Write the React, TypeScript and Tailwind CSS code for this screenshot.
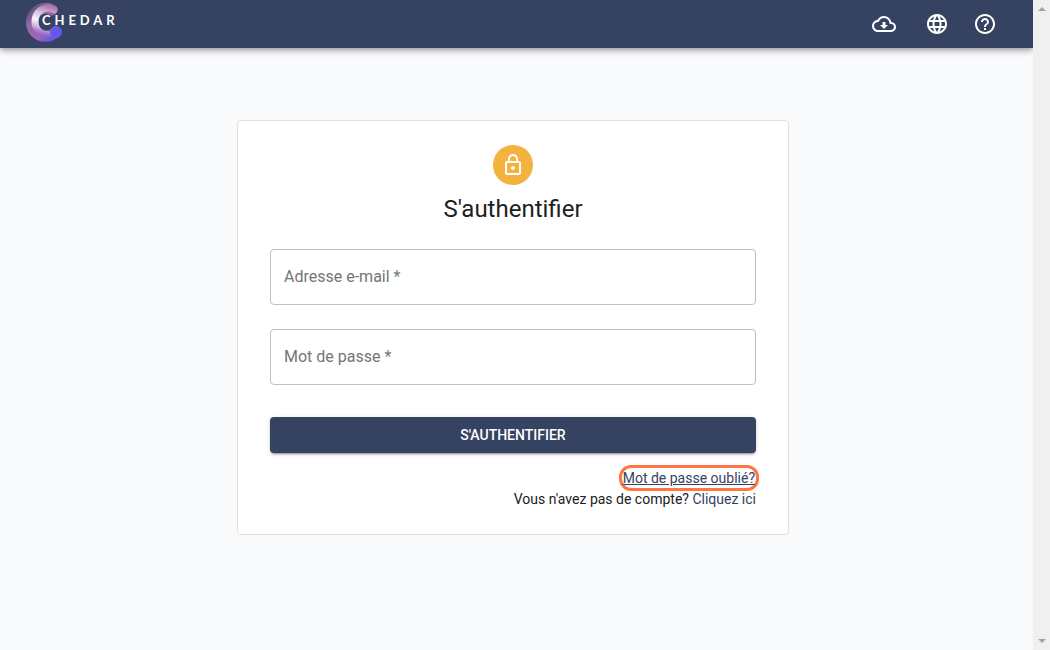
import { useState } from "react";
import type { ReactNode } from "react";
import { MdHelpOutline, MdLanguage, MdLockOutline } from "react-icons/md";

function Logo() {
  return (
    <a href="#" aria-label="Chedar" className="flex items-center pl-6 text-white">
      <svg viewBox="0 0 42 48" className="h-12 w-[42px]" fill="none" strokeLinecap="round" aria-hidden="true">
        <defs>
          <linearGradient id="arc" x1="4" y1="6" x2="36" y2="38" gradientUnits="userSpaceOnUse">
            <stop offset="0" stopColor="#7d6c95" stopOpacity="0.2" />
            <stop offset="0.3" stopColor="#9668a8" />
            <stop offset="0.65" stopColor="#9f63b8" />
            <stop offset="0.9" stopColor="#6259ea" />
          </linearGradient>
          <linearGradient id="shine" x1="30" y1="8" x2="22" y2="38" gradientUnits="userSpaceOnUse">
            <stop offset="0" stopColor="#b07ab0" />
            <stop offset="0.25" stopColor="#d9c0dc" />
            <stop offset="0.5" stopColor="#f8f4fb" />
            <stop offset="0.75" stopColor="#cba6dc" />
            <stop offset="1" stopColor="#8960d0" stopOpacity="0" />
          </linearGradient>
        </defs>
        <path d="M28 10A14 14 0 1 0 32 31.500" stroke="url(#arc)" strokeWidth="11" />
        <path d="M30 9.500C20 5 11 12 11 21.500C11 29 16 34 23 34.500" stroke="url(#shine)" strokeWidth="7" />
        <circle cx="32.500" cy="32" r="5.500" fill="#6259ea" />
      </svg>
      <span className="-ml-6 pb-2 font-[Lato,sans-serif] text-[13px] leading-5 font-bold tracking-[0.3em]">
        CHEDAR
      </span>
    </a>
  );
}

function CloudIcon() {
  return (
    <svg viewBox="0 0 24 24" className="size-6" fill="currentColor" aria-hidden="true">
      <path d="M19.35 10.04A7.49 7.49 0 0 0 12 4C9.11 4 6.6 5.64 5.35 8.04A5.994 5.994 0 0 0 0 14c0 3.31 2.69 6 6 6h13c2.76 0 5-2.24 5-5 0-2.64-2.05-4.78-4.65-4.96zM19 18H6c-2.21 0-4-1.79-4-4 0-2.05 1.53-3.76 3.56-3.97l1.07-.11.5-.95A5.469 5.469 0 0 1 12 6c2.62 0 4.88 1.86 5.39 4.43l.3 1.5 1.53.11A2.98 2.98 0 0 1 22 15c0 1.65-1.35 3-3 3z" />
      <path d="M13.45 10h-2.9v3H8l4 4 4-4h-2.55z" />
    </svg>
  );
}

function HeaderButton({ label, children }: { label: string; children: ReactNode }) {
  return (
    <button type="button" aria-label={label} className="flex size-12 items-center justify-center text-white">
      {children}
    </button>
  );
}

type FieldProps = {
  id: string;
  type: string;
  label: string;
  value: string;
  onChange: (value: string) => void;
};

function Field({ id, type, label, value, onChange }: FieldProps) {
  return (
    <div className="grid h-14 items-center rounded border border-[#c0c0c0]">
      <label htmlFor={id} className={`col-start-1 row-start-1 px-[13px] text-base text-[#757575] ${value ? "invisible" : ""}`}>
        {label} *
      </label>
      <input
        id={id}
        type={type}
        value={value}
        onChange={(e) => onChange(e.target.value)}
        required
        className="col-start-1 row-start-1 h-full w-full rounded bg-transparent px-[13px] text-base outline-none"
      />
    </div>
  );
}

export default function App() {
  const [email, setEmail] = useState("");
  const [password, setPassword] = useState("");

  return (
    <div className="flex min-h-screen bg-[#f9fafc] font-[Roboto,sans-serif] text-[#212121]">
      <div className="min-w-0 flex-1">
        <header className="flex h-12 items-center justify-between bg-[#364262] pr-6 shadow-[0_2px_4px_-1px_rgba(0,0,0,0.2),0_4px_5px_rgba(0,0,0,0.14),0_1px_10px_rgba(0,0,0,0.12)]">
          <Logo />
          <nav className="flex">
            <div className="pr-[5px]">
              <HeaderButton label="Télécharger">
                <CloudIcon />
              </HeaderButton>
            </div>
            <HeaderButton label="Langue">
              <MdLanguage className="size-6" />
            </HeaderButton>
            <HeaderButton label="Aide">
              <MdHelpOutline className="size-6" />
            </HeaderButton>
          </nav>
        </header>

        <main className="flex justify-center pt-[72px] pr-[7px]">
          <form
            onSubmit={(e) => e.preventDefault()}
            className="flex w-full max-w-[552px] flex-col rounded border border-[#e0e0e0] bg-white px-8 pt-6 pb-[25px]"
          >
            <div className="flex size-10 items-center justify-center self-center rounded-full bg-[#f3b33e] text-white">
              <MdLockOutline className="size-6" />
            </div>
            <h1 className="mt-2 text-center text-2xl">S'authentifier</h1>

            <div className="mt-6 flex flex-col gap-6">
              <Field id="email" type="email" label="Adresse e-mail" value={email} onChange={setEmail} />
              <Field id="password" type="password" label="Mot de passe" value={password} onChange={setPassword} />
            </div>

            <button
              type="submit"
              className="mt-8 h-9 rounded bg-[#364262] text-sm font-medium text-white shadow-[0_3px_1px_-2px_rgba(0,0,0,0.2),0_2px_2px_rgba(0,0,0,0.14),0_1px_5px_rgba(0,0,0,0.12)]"
            >
              S'AUTHENTIFIER
            </button>

            <div className="mt-3 flex flex-col items-end text-sm">
              <a href="#" className="-mr-[3px] -mb-0.5 rounded-xl border-3 border-[#ff7543] px-px text-[#364262] underline">
                Mot de passe oublié?
              </a>
              <p>
                Vous n'avez pas de compte?{" "}
                <a href="#" className="text-[#364262]">
                  Cliquez ici
                </a>
              </p>
            </div>
          </form>
        </main>
      </div>

      {/* Scrollbar track */}
      <div className="flex w-[17px] flex-col items-center justify-between bg-[#f0f0f0] py-[7px]" aria-hidden="true">
        <svg viewBox="0 0 8 4" className="h-1 w-2 fill-[#a3a3a3]">
          <path d="M0 4L4 0L8 4Z" />
        </svg>
        <svg viewBox="0 0 8 4" className="h-1 w-2 fill-[#a3a3a3]">
          <path d="M0 0H8L4 4Z" />
        </svg>
      </div>
    </div>
  );
}
